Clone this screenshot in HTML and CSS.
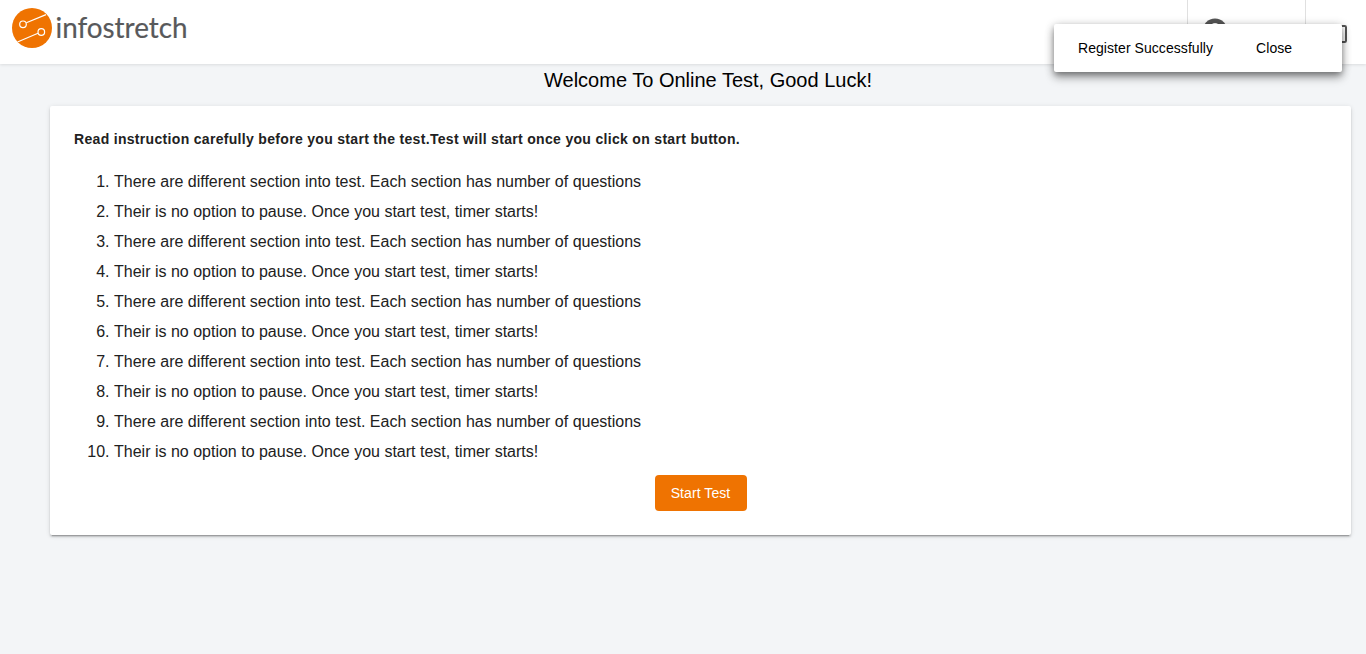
FILE: index.html
```html
<!DOCTYPE html>
<html lang="en">
<head>
<meta charset="utf-8">
<title>Online Test</title>
<link rel="stylesheet" href="styles.css">
</head>
<body>
<header class="header">
  <svg class="logo" width="210" height="64" viewBox="0 0 210 64" role="img" aria-label="infostretch">
    <circle class="logo-disc" cx="32" cy="28" r="20"/>
    <g class="logo-lines">
      <circle cx="23" cy="24.3" r="3.3"/>
      <path d="M26.3 22.8 L46 14.6"/>
      <circle cx="41.3" cy="32" r="3.3"/>
      <path d="M38 33.3 L17.5 42"/>
    </g>
    <text class="logo-text" x="55.5" y="37.5" textLength="132" lengthAdjust="spacingAndGlyphs">infostretch</text>
  </svg>
  <div class="actions">
    <div class="action action-user">
      <svg width="26" height="26" viewBox="0 0 26 26">
        <circle class="user-disc" cx="13" cy="13" r="12.5"/>
        <circle class="user-face" cx="13" cy="9" r="4"/>
        <path class="user-face" d="M5 20c1-5 15-5 16 0-4 4-12 4-16 0z"/>
      </svg>
    </div>
    <div class="action action-exit">
      <svg width="22" height="18" viewBox="0 0 22 18">
        <path class="exit-frame" d="M8 1h11.7q1.3 0 1.3 1.3v13.4q0 1.3-1.3 1.3H8"/>
        <path class="exit-frame" d="M0 9h12"/>
      </svg>
    </div>
  </div>
</header>
<main class="main">
  <h1 class="title">Welcome To Online Test, Good Luck!</h1>
  <section class="card">
    <h2 class="subtitle">Read instruction carefully before you start the test.Test will start once you click on start button.</h2>
    <ol class="rules">
      <li>There are different section into test. Each section has number of questions</li>
      <li>Their is no option to pause. Once you start test, timer starts!</li>
      <li>There are different section into test. Each section has number of questions</li>
      <li>Their is no option to pause. Once you start test, timer starts!</li>
      <li>There are different section into test. Each section has number of questions</li>
      <li>Their is no option to pause. Once you start test, timer starts!</li>
      <li>There are different section into test. Each section has number of questions</li>
      <li>Their is no option to pause. Once you start test, timer starts!</li>
      <li>There are different section into test. Each section has number of questions</li>
      <li>Their is no option to pause. Once you start test, timer starts!</li>
    </ol>
    <button class="start" type="button">Start Test</button>
  </section>
</main>
<div class="toast" role="status">
  <span>Register Successfully</span>
  <span class="toast-close">Close</span>
</div>
</body>
</html>
```

FILE: styles.css
```css
* { box-sizing: border-box; }
body {
  margin: 0;
  min-height: 100vh;
  background: #f3f5f7;
  color: #212121;
  font-family: "Liberation Sans", Arial, sans-serif;
}
.header {
  display: flex;
  justify-content: space-between;
  height: 64px;
  background: #fff;
  box-shadow: 0 1px 3px rgba(0, 0, 0, .1);
}
.logo { display: block; overflow: visible; }
.logo-disc { fill: #ef7301; }
.logo-lines { fill: none; stroke: #fff; stroke-width: 1.2; }
.logo-text { font: 29px Lato, sans-serif; fill: #58595b; stroke: #58595b; stroke-width: .2; }
.actions { display: flex; }
.action { border-left: 1px solid #e0e0e0; }
.action-user { width: 118px; padding: 18px 0 0 14px; }
.action-exit { width: 61px; padding: 25px 0 0 19px; }
.user-disc { fill: #555; }
.user-face { fill: #fff; }
.exit-frame { fill: none; stroke: #555; stroke-width: 2; }
.main { padding: 0 15px 0 50px; }
.title {
  margin: 0;
  padding: 4px 0 14px 15px;
  color: #000;
  font-size: 20px;
  font-weight: 400;
  line-height: 24px;
  text-align: center;
}
.card {
  display: flex;
  flex-direction: column;
  height: 429px;
  padding: 24px;
  border-radius: 2px;
  background: #fff;
  box-shadow: 0 3px 1px -2px rgba(0, 0, 0, .2), 0 2px 2px 0 rgba(0, 0, 0, .14), 0 1px 5px 0 rgba(0, 0, 0, .12);
}
.subtitle {
  margin: 0 0 19px;
  font-size: 14px;
  line-height: 18px;
  letter-spacing: .315px;
}
.rules {
  margin: 0 0 8px;
  padding-left: 40px;
  font-size: 16px;
  line-height: 30px;
}
.start {
  align-self: center;
  width: 92px;
  height: 36px;
  padding: 0;
  border: 0;
  border-radius: 4px;
  background: #ef7301;
  color: #fff;
  font: 14px "Liberation Sans", Arial, sans-serif;
  letter-spacing: .08px;
}
.toast {
  position: absolute;
  top: 24px;
  right: 24px;
  display: flex;
  align-items: center;
  gap: 43px;
  width: 288px;
  height: 48px;
  padding: 0 24px;
  border-radius: 2px;
  background: #fff;
  color: #000;
  font-size: 14px;
  letter-spacing: .06px;
  box-shadow: 0 3px 5px -1px rgba(0, 0, 0, .2), 0 6px 10px 0 rgba(0, 0, 0, .25), 0 2px 10px 0 rgba(0, 0, 0, .3);
}
```
